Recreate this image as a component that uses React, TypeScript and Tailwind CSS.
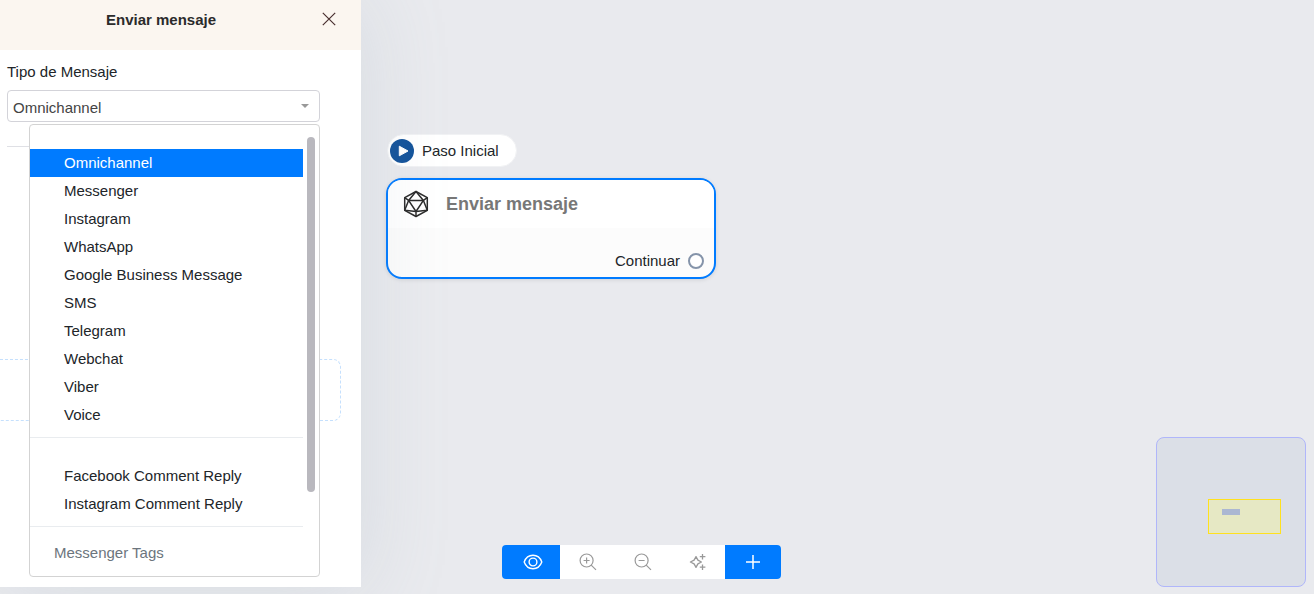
import React, { useState } from "react";

const channels = [
  "Omnichannel",
  "Messenger",
  "Instagram",
  "WhatsApp",
  "Google Business Message",
  "SMS",
  "Telegram",
  "Webchat",
  "Viber",
  "Voice",
];
const replies = ["Facebook Comment Reply", "Instagram Comment Reply"];

function Option({ label, selected, onSelect }: { label: string; selected: boolean; onSelect: () => void }) {
  return (
    <li role="option" aria-selected={selected}>
      <button
        type="button"
        onClick={onSelect}
        className={
          selected
            ? "block h-7 w-full bg-[#007bff] pl-[34px] text-left text-white"
            : "block h-7 w-full pl-[34px] text-left text-[#212529]"
        }
      >
        {label}
      </button>
    </li>
  );
}

function PolyhedronIcon() {
  return (
    <svg width="26" height="28" viewBox="0 0 26 28" fill="none" stroke="#2b2b2b" strokeWidth="1.5" strokeLinejoin="round" aria-hidden="true">
      <path d="M13 1.5 24.3 7.7V20.3L13 26.5 1.7 20.3V7.7Z" />
      <path d="M13 1.5 5.6 10.4H20.4Z" />
      <path d="M5.6 10.4 13 21.5 20.4 10.4" />
      <path d="M1.7 7.7 5.6 10.4 1.7 20.3 13 21.5 24.3 20.3 20.4 10.4 24.3 7.7M13 21.5V26.5" />
    </svg>
  );
}

function EyeIcon() {
  return (
    <svg width="20" height="16" viewBox="0 0 20 16" fill="none" stroke="white" strokeWidth="1.4" aria-hidden="true">
      <path d="M1.2 8C2.8 3.6 6 1.3 10 1.3S17.2 3.6 18.8 8C17.2 12.4 14 14.7 10 14.7S2.8 12.4 1.2 8Z" />
      <circle cx="10" cy="8" r="3.9" />
    </svg>
  );
}

function ZoomIcon({ plus }: { plus?: boolean }) {
  return (
    <svg width="18" height="18" viewBox="0 0 18 18" fill="none" stroke="#999" strokeWidth="1.2" aria-hidden="true">
      <circle cx="7.6" cy="7.5" r="6.5" />
      <path d="M12.2 12.1 17 16.9M4.6 7.5H10.6" />
      {plus && <path d="M7.6 4.5V10.5" />}
    </svg>
  );
}

function SparklesIcon() {
  return (
    <svg width="18" height="18" viewBox="0 0 18 18" fill="none" stroke="#999" strokeWidth="1.3" strokeLinejoin="round" aria-hidden="true">
      <path d="M7 3.6 8.9 7.1 12.4 9 8.9 10.9 7 14.4 5.1 10.9 1.4 9 5.1 7.1Z" />
      <path d="M13.5 1V6.4M10.8 3.7H16.4M13.5 11.4V17M10.8 14.2H16.4" />
    </svg>
  );
}

function Panel() {
  const [value, setValue] = useState("Omnichannel");
  return (
    <aside className="relative z-10 mb-[7px] w-[361px] shrink-0 bg-white shadow-[0_0_80px_rgba(150,170,180,0.22)]">
      <header className="flex h-[50px] items-start bg-[#fbf6f0] pr-[25px]">
        <h2 className="flex-1 pt-[9px] text-center text-[15px] leading-[22px] font-bold text-[#2b2b2b]">Enviar mensaje</h2>
        <button type="button" aria-label="Cerrar" className="mt-3 text-[#4a3030]">
          <svg width="14" height="14" viewBox="0 0 14 14" fill="none" stroke="currentColor" strokeWidth="1.2" aria-hidden="true">
            <path d="M.8.8 13.2 13.2M13.2.8.8 13.2" />
          </svg>
        </button>
      </header>
      <div className="pt-[11px] pl-[7px]">
        <label htmlFor="tipo" className="block leading-[22px] text-[#212529]">Tipo de Mensaje</label>
        <div className="relative mt-[7px] w-[313px]">
          <select
            id="tipo"
            value={value}
            onChange={(e) => setValue(e.target.value)}
            className="block h-8 w-full appearance-none rounded border border-[#d3d3d9] bg-white pt-1 pl-[5px] text-[#444]"
          >
            {[...channels, ...replies].map((c) => (
              <option key={c}>{c}</option>
            ))}
          </select>
          <svg className="pointer-events-none absolute top-[14px] right-[11px]" width="8" height="4" viewBox="0 0 8 4" fill="#999" aria-hidden="true">
            <path d="M0 0H8L4 4Z" />
          </svg>
          <div className="absolute top-[34px] right-0 left-[22px] z-10 flex h-[453px] rounded border border-[#d3d3d3] bg-white">
            <ul role="listbox" aria-label="Tipo de Mensaje" className="mr-1 flex-1 pt-6">
              {channels.map((c) => (
                <Option key={c} label={c} selected={c === value} onSelect={() => setValue(c)} />
              ))}
              <li role="separator" className="mt-2 mb-6 border-t border-[#e9ecef]" />
              {replies.map((c) => (
                <Option key={c} label={c} selected={c === value} onSelect={() => setValue(c)} />
              ))}
              <li role="separator" className="mt-2 border-t border-[#e9ecef]" />
              <li role="presentation" className="pt-[15px] pl-6 leading-[22px] text-[#6c757d]">Messenger Tags</li>
            </ul>
            <div className="mt-3 mr-1 h-[355px] w-2 rounded bg-[#b9b8be]" />
          </div>
        </div>
        <hr className="mt-6 mr-[41px] border-[#dfe0e5]" />
      </div>
      <div className="mt-[212px] mr-5 h-[62px] rounded-r-lg border border-l-0 border-dashed border-[#c5e0fd]" />
    </aside>
  );
}

function FlowNodes() {
  return (
    <div className="absolute top-[134px] left-[25px] w-[330px] text-[#212529]">
      <div className="ml-px flex h-[33px] w-[130px] items-center gap-2 rounded-full border border-[#f1f2f4] bg-white pl-[2px]">
        <svg width="24" height="24" viewBox="0 0 24 24" aria-hidden="true">
          <circle cx="12" cy="12" r="12" fill="#12529a" />
          <path d="M9.3 7.2V16.8L18 12Z" fill="white" stroke="white" strokeLinejoin="round" />
        </svg>
        <span className="leading-5">Paso Inicial</span>
      </div>
      <article className="mt-[11px] flex h-[101px] flex-col overflow-hidden rounded-2xl border-2 border-[#007bff] bg-[#fcfcfc] shadow-[0_1px_4px_rgba(0,0,0,0.1)]">
        <h3 className="flex h-12 items-center gap-[17px] bg-white pl-[15px] text-lg font-bold text-[#777]">
          <PolyhedronIcon />
          Enviar mensaje
        </h3>
        <div className="mt-auto flex h-8 items-center justify-end gap-2 pr-[10px]">
          <span>Continuar</span>
          <span className="size-4 rounded-full border-2 border-[#8594aa] bg-white" />
        </div>
      </article>
    </div>
  );
}

function Toolbar() {
  return (
    <div role="toolbar" className="absolute bottom-[15px] left-[141px] flex h-[34px] overflow-hidden rounded bg-white">
      <button type="button" aria-label="Vista previa" className="flex w-[58px] items-center justify-center bg-[#007bff] pl-1"><EyeIcon /></button>
      <button type="button" aria-label="Acercar" className="flex w-[55px] items-center justify-center pl-px"><ZoomIcon plus /></button>
      <button type="button" aria-label="Alejar" className="flex w-[55px] items-center justify-center"><ZoomIcon /></button>
      <button type="button" aria-label="Ordenar" className="flex w-[55px] items-center justify-center"><SparklesIcon /></button>
      <button type="button" aria-label="Agregar" className="flex w-14 items-center justify-center bg-[#007bff]">
        <svg width="14" height="14" viewBox="0 0 14 14" stroke="white" strokeWidth="1.5" aria-hidden="true">
          <path d="M7 0V14M0 7H14" />
        </svg>
      </button>
    </div>
  );
}

export default function App() {
  return (
    <div className="flex h-screen overflow-hidden bg-[#e9eaee] font-['Liberation_Sans',Arial,sans-serif] text-[15px]">
      <Panel />
      <main className="relative flex-1">
        <FlowNodes />
        <Toolbar />
        <div className="absolute right-2 bottom-[7px] size-[150px] rounded-lg border border-[#b0b6fa] bg-[#dbdfe7]">
          <div className="absolute top-[61px] left-[51px] h-[35px] w-[73px] border border-[#ffe11f] bg-[#e6e8c4]">
            <div className="absolute top-[9px] left-[13px] h-[6px] w-[18px] bg-[#abb7d2]" />
          </div>
        </div>
      </main>
    </div>
  );
}
